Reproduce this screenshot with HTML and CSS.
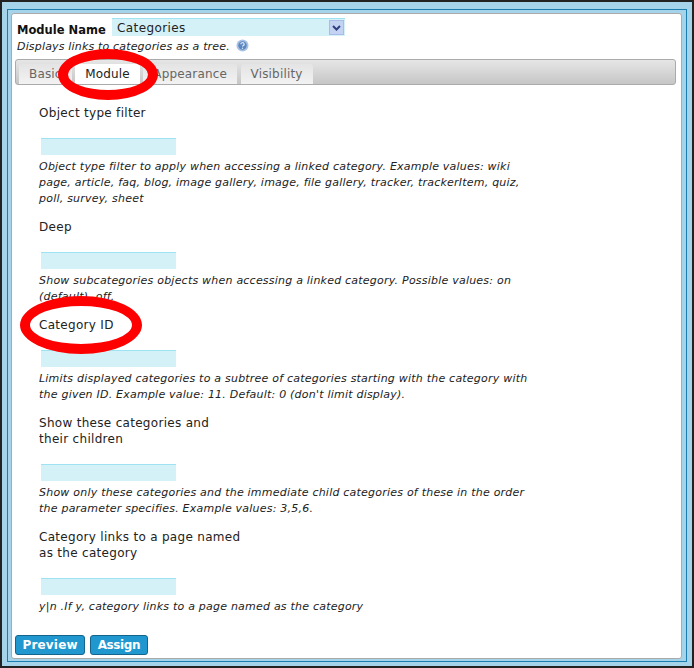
FILE: index.html
```html
<!DOCTYPE html>
<html lang="en">
<head>
    <meta charset="UTF-8">
    <meta name="viewport" content="width=device-width, initial-scale=1.0">
    <title>Assign Module</title>
    <link rel="stylesheet" href="styles.css">
</head>
<body>
    <div class="frame">
        <div class="panel">
            <div class="module-row">
                <label class="module-label">Module Name</label>
                <div class="select">
                    <span>Categories</span>
                    <span class="select-btn">
                        <svg width="9" height="6" viewBox="0 0 9 6"><path d="M1 1l3.5 3.5L8 1" fill="none" stroke="#2f3f7f" stroke-width="2"/></svg>
                    </span>
                </div>
            </div>
            <p class="module-desc">Displays links to categories as a tree.
                <svg class="help" width="13" height="13" viewBox="0 0 13 13"><circle cx="6.5" cy="6.5" r="6" fill="#a9c2e4"/><circle cx="6.5" cy="6.5" r="4.2" fill="#5b88c2"/><path d="M4.8 5.2a1.7 1.5 0 1 1 2.4 1.4c-.5.3-.7.5-.7 1" fill="none" stroke="#dfe9f6" stroke-width="1.2"/><circle cx="6.5" cy="9.2" r=".7" fill="#dfe9f6"/></svg>
            </p>

            <div class="tabs">
                <span class="tab">Basic</span>
                <span class="tab active">Module</span>
                <span class="tab">Appearance</span>
                <span class="tab">Visibility</span>
            </div>

            <div class="fields">
                <div class="field">
                    <div class="field-label">Object type filter</div>
                    <div class="input"></div>
                    <p class="hint">Object type filter to apply when accessing a linked category. Example values: wiki page, article, faq, blog, image gallery, image, file gallery, tracker, trackerItem, quiz, poll, survey, sheet</p>
                </div>
                <div class="field">
                    <div class="field-label">Deep</div>
                    <div class="input"></div>
                    <p class="hint">Show subcategories objects when accessing a linked category. Possible values: on (default), off.</p>
                </div>
                <div class="field">
                    <div class="field-label">Category ID</div>
                    <div class="input"></div>
                    <p class="hint">Limits displayed categories to a subtree of categories starting with the category with the given ID. Example value: 11. Default: 0 (don't limit display).</p>
                </div>
                <div class="field">
                    <div class="field-label">Show these categories and<br>their children</div>
                    <div class="input"></div>
                    <p class="hint">Show only these categories and the immediate child categories of these in the order the parameter specifies. Example values: 3,5,6.</p>
                </div>
                <div class="field">
                    <div class="field-label">Category links to a page named<br>as the category</div>
                    <div class="input"></div>
                    <p class="hint">y|n .If y, category links to a page named as the category</p>
                </div>
            </div>

            <div class="actions">
                <button class="btn">Preview</button>
                <button class="btn btn-assign">Assign</button>
            </div>

            <div class="ring ring-tab"></div>
            <div class="ring ring-field"></div>
        </div>
    </div>
</body>
</html>
```

FILE: styles.css
```css
* {
    box-sizing: border-box;
}
html, body {
    margin: 0;
}
body {
    font-family: "DejaVu Sans", Verdana, sans-serif;
    font-size: 12px;
    letter-spacing: 0.17px;
    color: #222;
    background: #a5d3ea;
    border: 2px solid #222;
    padding: 7px 5px 4px 5px;
    height: 668px;
    overflow: hidden;
}
.frame {
    height: 100%;
    background: #a5d3ea;
    border: 1px solid #1a7fb0;
    padding: 3px 4px 2px 3px;
}
.panel {
    position: relative;
    height: 100%;
    background: white;
    border: 1px solid #aaa;
    border-radius: 3px;
    padding: 4px 3px 0 3px;
    overflow: hidden;
}
.module-row {
    display: flex;
    align-items: center;
    height: 18px;
    padding-left: 2px;
}
.module-label {
    width: 95px;
    font-weight: bold;
    font-size: 11.5px;
    letter-spacing: 0;
    color: #111;
    margin-top: 6px;
}
.select {
    display: flex;
    justify-content: space-between;
    align-items: center;
    width: 233px;
    height: 18px;
    background: #d4f1f8;
    border-top: 1px solid #9fe3f2;
    letter-spacing: 0.4px;
    padding-left: 5px;
    padding-right: 1px;
}
.select-btn {
    display: flex;
    align-items: center;
    justify-content: center;
    width: 15px;
    height: 15px;
    background: #c5d3f3;
    border: 1px solid #a9bbe6;
}
.module-desc {
    margin: 3px 0 0 2px;
    font-size: 11px;
    font-style: italic;
    line-height: 15px;
}
.help {
    vertical-align: -2px;
    margin-left: 2px;
}
.tabs {
    display: flex;
    gap: 3.5px;
    align-items: flex-end;
    height: 26px;
    margin-top: 5px;
    margin-right: 2px;
    padding-left: 3px;
    background: linear-gradient(#e6e6e6, #c6c6c6);
    border: 1px solid #aaa;
    border-radius: 3px;
}
.tab {
    height: 20px;
    padding: 0 10px;
    line-height: 21px;
    color: #666;
    background: linear-gradient(#e4e4e4, #f2f2f2);
    border-radius: 3px 3px 0 0;
}
.tab.active {
    color: #222;
    background: white;
}
.fields {
    padding-left: 24px;
    margin-top: 20px;
}
.field {
    width: 490px;
    margin-bottom: 12px;
}
.field-label {
    line-height: 16px;
    letter-spacing: 0.3px;
    margin-bottom: 17px;
    width: 230px;
}
.input {
    width: 135px;
    height: 17px;
    margin-left: 2px;
    background: #d4f1f8;
    border-top: 1px solid #9fe3f2;
}
.hint {
    margin: 4px 0 0 0;
    font-size: 11px;
    font-style: italic;
    letter-spacing: 0.22px;
    line-height: 16px;
}
.actions {
    display: flex;
    gap: 5px;
    margin-top: 20px;
}
.btn {
    height: 20px;
    padding: 0 6.5px;
    font-family: "DejaVu Sans", Verdana, sans-serif;
    font-size: 12px;
    font-weight: bold;
    letter-spacing: 0.17px;
    color: white;
    background: #2097cf;
    border: 1px solid #14648c;
    border-radius: 3px;
}
.btn-assign {
    letter-spacing: -0.4px;
}
/* red marker rings drawn over the screenshot */
.ring {
    position: absolute;
    border: 10px solid #f00;
    border-radius: 50%;
}
.ring-tab {
    left: 46px;
    top: 35px;
    width: 100px;
    height: 51px;
}
.ring-field {
    left: 8px;
    top: 282px;
    width: 122px;
    height: 58px;
}
```
